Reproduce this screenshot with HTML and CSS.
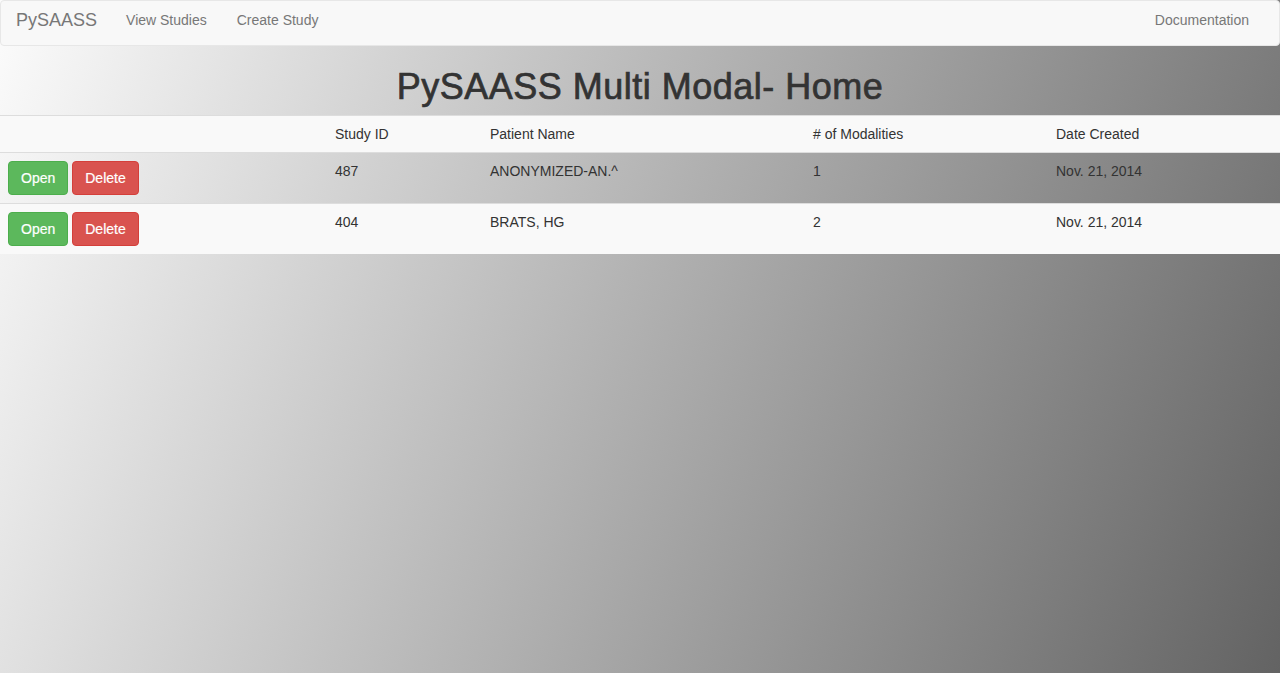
FILE: index.html
```html
<!DOCTYPE html>
<html lang="en">
<head>
<meta charset="utf-8">
<title>PySAASS Multi Modal- Home</title>
<link rel="stylesheet" href="styles.css">
</head>
<body>
<nav class="navbar">
  <div class="navbar-left">
    <a class="brand" href="#">PySAASS</a>
    <a class="nav-link" href="#">View Studies</a>
    <a class="nav-link" href="#">Create Study</a>
  </div>
  <div class="navbar-right">
    <a class="nav-link" href="#">Documentation</a>
  </div>
</nav>
<h1 class="title">PySAASS Multi Modal- Home</h1>
<table class="studies">
  <colgroup>
    <col class="c-actions">
    <col class="c-id">
    <col class="c-name">
    <col class="c-mod">
    <col class="c-date">
  </colgroup>
  <tbody>
    <tr class="row-light">
      <td></td>
      <td>Study ID</td>
      <td>Patient Name</td>
      <td># of Modalities</td>
      <td>Date Created</td>
    </tr>
    <tr>
      <td class="actions"><button class="btn btn-open">Open</button><button class="btn btn-delete">Delete</button></td>
      <td>487</td>
      <td>ANONYMIZED-AN.^</td>
      <td>1</td>
      <td>Nov. 21, 2014</td>
    </tr>
    <tr class="row-light">
      <td class="actions"><button class="btn btn-open">Open</button><button class="btn btn-delete">Delete</button></td>
      <td>404</td>
      <td>BRATS, HG</td>
      <td>2</td>
      <td>Nov. 21, 2014</td>
    </tr>
  </tbody>
</table>
</body>
</html>
```
FILE: styles.css
```css
html {
  height: 100%;
}
body {
  margin: 0;
  min-height: 100%;
  font-family: "Liberation Sans", Arial, sans-serif;
  font-size: 14px;
  line-height: 20px;
  color: #333;
  background: linear-gradient(112deg, #fcfcfc 0%, #636363 100%);
}
.navbar {
  display: flex;
  justify-content: space-between;
  align-items: flex-start;
  height: 44px;
  background: #f8f8f8;
  border: 1px solid #e7e7e7;
  border-radius: 4px;
  padding: 0 15px 0 0;
}
.navbar-left,
.navbar-right {
  display: flex;
}
.brand {
  display: block;
  padding: 9px 14px 15px 15px;
  font-size: 18px;
  line-height: 20px;
  color: #777;
  text-decoration: none;
}
.nav-link {
  display: block;
  padding: 9px 15px 15px 15px;
  font-size: 14px;
  line-height: 20px;
  color: #777;
  text-decoration: none;
}
.title {
  margin: 21px 0 8px;
  font-size: 36px;
  line-height: 40px;
  font-weight: 400;
  letter-spacing: 0.5px;
  -webkit-text-stroke: 0.7px #333;
  text-align: center;
  color: #333;
}
.studies {
  width: 100%;
  border-collapse: collapse;
  table-layout: fixed;
}
.c-actions { width: 327px; }
.c-id { width: 155px; }
.c-name { width: 323px; }
.c-mod { width: 243px; }
.c-date { width: auto; }
.studies td {
  padding: 8px;
  vertical-align: top;
  border-top: 1px solid #ddd;
  text-align: left;
}
.row-light {
  background: #f9f9f9;
}
.actions {
  font-size: 0;
}
.btn {
  display: inline-block;
  font-family: "Liberation Sans", Arial, sans-serif;
  font-size: 14px;
  line-height: 20px;
  padding: 6px 12px;
  border: 1px solid transparent;
  border-radius: 4px;
  color: #fff;
  cursor: pointer;
  margin: 0 4px 0 0;
  -webkit-text-stroke: 0.2px #fff;
}
.btn-open {
  background: #5cb85c;
  border-color: #4cae4c;
}
.btn-delete {
  background: #d9534f;
  border-color: #d43f3a;
}
```
